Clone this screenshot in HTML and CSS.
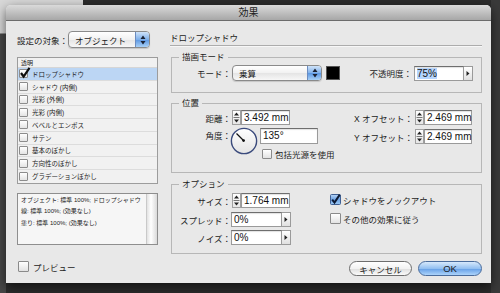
FILE: index.html
```html
<!DOCTYPE html>
<html lang="ja">
<head>
    <meta charset="UTF-8">
    <title>効果</title>
    <link rel="stylesheet" href="styles.css">
</head>
<body>

<div class="behind"></div>

<div class="dialog">
    <div class="titlebar">効果</div>

    <div class="content">
        <!-- 左側: 対象と効果リスト -->
        <div class="left-col">
            <div class="target-row">
                <span class="target-label">設定の対象：</span>
                <div class="popup popup-target">
                    <span class="popup-text">オブジェクト</span>
                    <span class="popup-arrows"><svg width="6" height="10" viewBox="0 0 6 10"><path d="M3 0.5 L5.5 4 L0.5 4 Z M3 9.5 L5.5 6 L0.5 6 Z" fill="#1b2233"/></svg></span>
                </div>
            </div>

            <div class="effect-list">
                <div class="list-head">透明</div>
                <div class="list-row selected">
                    <span class="cb"><svg class="tick" width="12" height="12" viewBox="0 0 12 12"><path d="M2 6 L4.6 9.5 L10.5 0.8" fill="none" stroke="#0d0d0d" stroke-width="2.2"/></svg></span>ドロップシャドウ
                </div>
                <div class="list-row"><span class="cb"></span>シャドウ (内側)</div>
                <div class="list-row"><span class="cb"></span>光彩 (外側)</div>
                <div class="list-row"><span class="cb"></span>光彩 (内側)</div>
                <div class="list-row"><span class="cb"></span>ベベルとエンボス</div>
                <div class="list-row"><span class="cb"></span>サテン</div>
                <div class="list-row"><span class="cb"></span>基本のぼかし</div>
                <div class="list-row"><span class="cb"></span>方向性のぼかし</div>
                <div class="list-row"><span class="cb"></span>グラデーションぼかし</div>
            </div>

            <div class="summary">
                <div class="summary-text">
                    オブジェクト: 標準 100%; ドロップシャドウ<br>
                    線: 標準 100%; (効果なし)<br>
                    塗り: 標準 100%; (効果なし)
                </div>
                <div class="scroll-track"></div>
            </div>

            <div class="check preview">
                <span class="box"></span>プレビュー
            </div>
        </div>

        <!-- 右側: ドロップシャドウの設定 -->
        <div class="right-col">
            <div class="section-title">ドロップシャドウ</div>

            <fieldset class="group">
                <legend>描画モード</legend>
                <div class="grp-body mode-body">
                    <span class="lbl">モード：</span>
                    <div class="popup popup-mode">
                        <span class="popup-text">乗算</span>
                        <span class="popup-arrows"><svg width="6" height="10" viewBox="0 0 6 10"><path d="M3 0.5 L5.5 4 L0.5 4 Z M3 9.5 L5.5 6 L0.5 6 Z" fill="#1b2233"/></svg></span>
                    </div>
                    <span class="swatch"></span>
                    <span class="lbl lbl-opacity">不透明度：</span>
                    <span class="field field-opacity"><span class="sel">75%</span></span>
                    <span class="menu-btn"><svg width="4" height="5" viewBox="0 0 4 5"><path d="M0.5 0 L3.5 2.5 L0.5 5 Z" fill="#222"/></svg></span>
                </div>
            </fieldset>

            <fieldset class="group group-pos">
                <legend>位置</legend>
                <div class="grp-body">
                    <div class="col-left">
                        <div class="row">
                            <span class="lbl">距離：</span>
                            <span class="stepper"><svg width="9" height="15" viewBox="0 0 9 15"><path d="M4.5 2.5 L7 5.5 L2 5.5 Z M4.5 12.5 L7 9.5 L2 9.5 Z" fill="#222"/><path d="M1.5 7.5 H7.5" stroke="#777" stroke-width="1"/></svg></span>
                            <span class="field field-num">3.492 mm</span>
                        </div>
                        <div class="row angle-row">
                            <span class="lbl">角度：</span>
                            <svg class="dial" width="28" height="28" viewBox="0 0 28 28">
                                <defs>
                                    <linearGradient id="dialFill" x1="0" y1="0" x2="0" y2="1">
                                        <stop offset="0" stop-color="#ffffff"/>
                                        <stop offset="1" stop-color="#e4e4e4"/>
                                    </linearGradient>
                                </defs>
                                <circle cx="14" cy="14" r="12.6" fill="url(#dialFill)" stroke="#3a4a7c" stroke-width="1.4"/>
                                <path d="M6.5 6.5 L14 14" stroke="#111" stroke-width="1.3"/>
                                <circle cx="13.6" cy="13.6" r="1.4" fill="#111"/>
                            </svg>
                            <div class="angle-col">
                                <span class="field field-angle">135°</span>
                                <div class="check small-check">
                                    <span class="box"></span>包括光源を使用
                                </div>
                            </div>
                        </div>
                    </div>
                    <div class="col-right">
                        <div class="row">
                            <span class="lbl lbl-wide">X オフセット：</span>
                            <span class="stepper"><svg width="9" height="15" viewBox="0 0 9 15"><path d="M4.5 2.5 L7 5.5 L2 5.5 Z M4.5 12.5 L7 9.5 L2 9.5 Z" fill="#222"/><path d="M1.5 7.5 H7.5" stroke="#777" stroke-width="1"/></svg></span>
                            <span class="field field-off">2.469 mm</span>
                        </div>
                        <div class="row row-y">
                            <span class="lbl lbl-wide">Y オフセット：</span>
                            <span class="stepper"><svg width="9" height="15" viewBox="0 0 9 15"><path d="M4.5 2.5 L7 5.5 L2 5.5 Z M4.5 12.5 L7 9.5 L2 9.5 Z" fill="#222"/><path d="M1.5 7.5 H7.5" stroke="#777" stroke-width="1"/></svg></span>
                            <span class="field field-off">2.469 mm</span>
                        </div>
                    </div>
                </div>
            </fieldset>

            <fieldset class="group group-opt">
                <legend>オプション</legend>
                <div class="grp-body">
                    <div class="col-left">
                        <div class="row">
                            <span class="lbl">サイズ：</span>
                            <span class="stepper"><svg width="9" height="15" viewBox="0 0 9 15"><path d="M4.5 2.5 L7 5.5 L2 5.5 Z M4.5 12.5 L7 9.5 L2 9.5 Z" fill="#222"/><path d="M1.5 7.5 H7.5" stroke="#777" stroke-width="1"/></svg></span>
                            <span class="field field-num">1.764 mm</span>
                        </div>
                        <div class="row row-spread">
                            <span class="lbl">スプレッド：</span>
                            <span class="field field-pct">0%</span>
                            <span class="menu-btn"><svg width="4" height="5" viewBox="0 0 4 5"><path d="M0.5 0 L3.5 2.5 L0.5 5 Z" fill="#222"/></svg></span>
                        </div>
                        <div class="row row-noise">
                            <span class="lbl">ノイズ：</span>
                            <span class="field field-pct">0%</span>
                            <span class="menu-btn"><svg width="4" height="5" viewBox="0 0 4 5"><path d="M0.5 0 L3.5 2.5 L0.5 5 Z" fill="#222"/></svg></span>
                        </div>
                    </div>
                    <div class="col-right">
                        <div class="check opt-check">
                            <svg class="box-on" width="11" height="11" viewBox="0 0 11 11">
                                <defs>
                                    <linearGradient id="blueBox" x1="0" y1="0" x2="0" y2="1">
                                        <stop offset="0" stop-color="#b9d6f6"/>
                                        <stop offset="0.5" stop-color="#6ea3e4"/>
                                        <stop offset="1" stop-color="#9ecbf5"/>
                                    </linearGradient>
                                </defs>
                                <rect x="0.5" y="0.5" width="10" height="10" rx="1" fill="url(#blueBox)" stroke="#3f5f92"/>
                                <path d="M2.2 5.6 L4.5 8.6 L9.8 0.6" fill="none" stroke="#0e1a33" stroke-width="2"/>
                            </svg>
                            シャドウをノックアウト
                        </div>
                        <div class="check opt-check second">
                            <span class="box"></span>その他の効果に従う
                        </div>
                    </div>
                </div>
            </fieldset>

            <div class="buttons">
                <span class="btn btn-cancel">キャンセル</span>
                <span class="btn btn-ok">OK</span>
            </div>
        </div>
    </div>
</div>

</body>
</html>
```

FILE: styles.css
```css
* {
    box-sizing: border-box;
}

body {
    margin: 0;
    padding: 5px 0 0 6px;
    width: 500px;
    height: 293px;
    overflow: hidden;
    position: relative;
    background: linear-gradient(to right, #474747 0, #474747 6px, #2c2c2c 6px, #2c2c2c 491px, #3a3a3a 491px);
    font-family: "Liberation Sans", "Noto Sans CJK JP", sans-serif;
    color: #1c1c1c;
}

/* 後ろのウィンドウ */
.behind {
    position: absolute;
    left: 0;
    top: 0;
    width: 83px;
    height: 34px;
    background: #d8d8d8;
    border-bottom: 1px solid #8e8e8e;
}

.dialog {
    position: relative;
    width: 485px;
    height: 278px;
    background: #e8e8e8;
    border-radius: 5px 5px 0 0;
    box-shadow: 0 4px 12px rgba(0, 0, 0, 0.6);
}

.titlebar {
    height: 16px;
    line-height: 15px;
    text-align: center;
    font-size: 10px;
    color: #222;
    background: linear-gradient(#dadada, #a7a7a7);
    border-bottom: 1px solid #6c6c6c;
    border-radius: 5px 5px 0 0;
}

.content {
    display: flex;
    gap: 12px;
    padding: 10px 9px 0 11px;
    font-size: 8.5px;
}

.left-col {
    width: 141px;
}

.right-col {
    width: 312px;
}

/* ポップアップ */
.target-row {
    display: flex;
    align-items: center;
    height: 17px;
}

.target-label {
    width: 51px;
}

.popup {
    display: flex;
    align-items: center;
    height: 17px;
    border: 1px solid #8a8a8a;
    border-radius: 4px;
    overflow: hidden;
    background: linear-gradient(#ffffff, #f1f1f1 50%, #e4e4e4 51%, #f7f7f7);
    box-shadow: 0 1px 1px rgba(0, 0, 0, 0.15);
}

.popup-text {
    padding-left: 6px;
}

.popup-target {
    width: 82px;
}

.popup-mode {
    width: 90px;
    height: 16px;
    margin-left: 1px;
}

.popup-arrows {
    margin-left: auto;
    width: 14px;
    align-self: stretch;
    display: flex;
    align-items: center;
    justify-content: center;
    border-left: 1px solid #6b8cc0;
    background: linear-gradient(#cfe3f9, #7fb0ea 50%, #5a96e2 51%, #a8d0f6);
}

/* 効果リスト */
.effect-list {
    margin-top: 9px;
    border: 1px solid #9c9c9c;
    background: #f1f1f1;
    font-size: 6.5px;
}

.list-head {
    height: 10px;
    line-height: 10px;
    padding-left: 3px;
    font-size: 6px;
    border-bottom: 1px solid #d6d6d6;
}

.list-row {
    display: flex;
    align-items: center;
    height: 12.75px;
    padding-left: 1px;
    border-bottom: 1px solid #dcdcdc;
}

.list-row:last-child {
    border-bottom: none;
}

.list-row.selected {
    background: #bcd6f4;
}

.cb {
    position: relative;
    width: 9px;
    height: 9px;
    margin-right: 4px;
    border: 1px solid #8c8c8c;
    border-radius: 1px;
    background: linear-gradient(#ffffff, #e4e4e4);
}

.cb .tick {
    position: absolute;
    left: -1px;
    top: -3px;
}

/* 説明ボックス */
.summary {
    display: flex;
    height: 52px;
    margin-top: 9px;
    border: 1px solid #8e8e8e;
    background: #f6f6f6;
}

.summary-text {
    flex: 1;
    padding: 1px 3px;
    font-size: 6px;
    line-height: 11.5px;
    white-space: nowrap;
    overflow: hidden;
}

.scroll-track {
    width: 11px;
    border-left: 1px solid #c9c9c9;
    background: linear-gradient(to right, #e2e2e2, #ffffff 40%, #dadada);
}

/* チェックボックス */
.check {
    display: flex;
    align-items: center;
    white-space: nowrap;
}

.check .box {
    flex: none;
    width: 11px;
    height: 11px;
    margin-right: 4px;
    border: 1px solid #8a8a8a;
    border-radius: 1px;
    background: linear-gradient(#ffffff, #e2e2e2);
}

.preview {
    margin-top: 16px;
    margin-left: 1px;
    height: 12px;
}

/* 右側 */
.section-title {
    height: 15px;
    line-height: 14px;
    border-bottom: 1px solid #acacac;
    box-shadow: 0 1px 0 #f7f7f7;
}

.group {
    width: 311px;
    margin: 6px 0 0 1px;
    padding: 0;
    border: 1px solid #b7b7b7;
}

.group legend {
    margin-left: 7px;
    padding: 0 3px;
    font-size: 8.5px;
    line-height: 10px;
}

.group-pos {
    margin-top: 5px;
}

.grp-body {
    display: flex;
    align-items: flex-start;
    padding: 2px 9px 12px 0;
}

.mode-body {
    align-items: center;
    padding: 3px 8px 11px 0;
}

.group-opt .grp-body {
    padding: 4px 9px 8px 0;
}

.lbl {
    width: 59px;
    flex: none;
    text-align: right;
    white-space: nowrap;
}

.lbl-wide {
    width: 83px;
}

.lbl-opacity {
    flex: 1;
    width: auto;
    margin-right: 2px;
}

.swatch {
    width: 14px;
    height: 14px;
    margin-left: 4px;
    background: #000;
    border: 1px solid #555;
}

.col-left {
    width: 158px;
    flex: none;
}

.col-right {
    width: 142px;
    flex: none;
}

.row {
    display: flex;
    align-items: center;
}

.row-y {
    margin-top: 4px;
}

.row-spread {
    margin-top: 4px;
}

.row-noise {
    margin-top: 3px;
}

.field {
    display: block;
    height: 15px;
    padding-left: 2px;
    line-height: 13px;
    font-size: 10px;
    color: #111;
    background: #fff;
    border: 1px solid #9a9a9a;
    border-top-color: #6e6e6e;
    box-shadow: inset 0 1px 1px rgba(0, 0, 0, 0.12);
    white-space: nowrap;
}

.field .sel {
    background: #b5d5fd;
}

.field-opacity {
    width: 50px;
}

.field-num {
    width: 49px;
}

.field-off {
    width: 48px;
}

.field-pct {
    width: 51px;
}

.field-angle {
    width: 58px;
    height: 16px;
    line-height: 14px;
    margin-top: 1px;
}

.menu-btn {
    display: flex;
    align-items: center;
    justify-content: center;
    width: 9px;
    height: 15px;
    border: 1px solid #9a9a9a;
    border-left: none;
    background: linear-gradient(#ffffff, #e0e0e0);
}

.stepper {
    display: block;
    width: 9px;
    height: 15px;
    margin-left: 1px;
    border: 1px solid #a0a0a0;
    background: linear-gradient(#ffffff, #e6e6e6);
}

.stepper svg {
    display: block;
    margin: -1px;
}

.col-right .stepper {
    margin-left: 2px;
}

.angle-row {
    align-items: flex-start;
    margin-top: 2px;
}

.angle-row .lbl {
    line-height: 18px;
}

.dial {
    margin-left: -1px;
    flex: none;
}

.angle-col {
    margin-left: 2px;
}

.small-check {
    margin: 4px 0 0 2px;
}

.small-check .box {
    width: 10px;
    height: 10px;
    margin-right: 3px;
}

.opt-check {
    margin-top: 1px;
    height: 11px;
}

.opt-check .box-on {
    margin-right: 2px;
    flex: none;
}

.opt-check .box {
    margin-right: 2px;
}

.opt-check.second {
    margin-top: 8px;
}

/* ボタン */
.buttons {
    display: flex;
    justify-content: flex-end;
    gap: 6px;
    margin-top: 7px;
}

.btn {
    display: flex;
    align-items: center;
    justify-content: center;
    height: 15px;
    border-radius: 8px;
    font-size: 8.5px;
}

.btn-cancel {
    width: 63px;
    border: 1px solid #6e6e6e;
    background: linear-gradient(#ffffff, #f2f2f2 50%, #dedede 51%, #fbfbfb);
}

.btn-ok {
    width: 64px;
    font-size: 9.5px;
    border: 1px solid #4a6c9c;
    background: linear-gradient(#d7e9fc, #93c0f1 50%, #639ee6 51%, #acd4fb);
}
```
